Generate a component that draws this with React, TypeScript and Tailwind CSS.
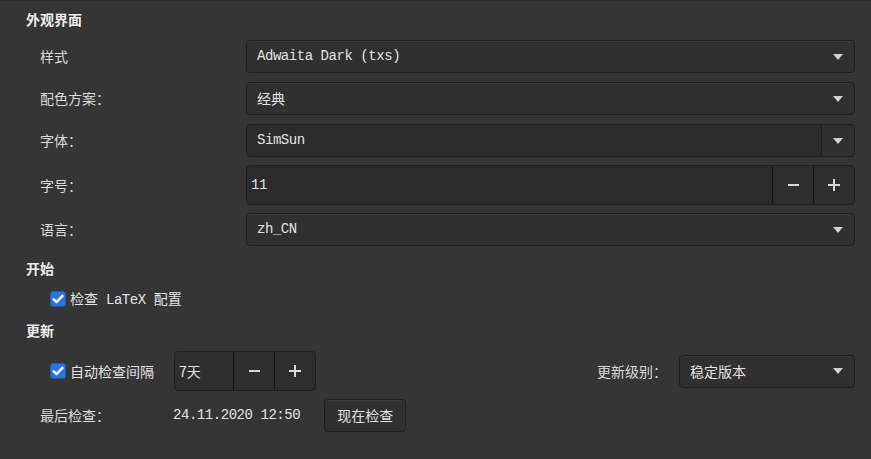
import React from 'react'

const mono = "font-['Liberation_Mono','Noto_Sans_CJK_SC',monospace] text-[14px] tracking-[-0.45px]"
const cjk = "font-['Noto_Sans_CJK_SC','Noto_Sans',sans-serif]"

function Arrow() {
  return (
    <svg width="10" height="6" viewBox="0 0 10 6" className="shrink-0">
      <polygon points="0,0 10,0 5,6" fill="#d2d2d2" />
    </svg>
  )
}

function Minus() {
  return (
    <svg width="11" height="12" viewBox="0 0 11 12">
      <rect x="0" y="5" width="11" height="2" fill="#d8d8d8" />
    </svg>
  )
}

function Plus() {
  return (
    <svg width="12" height="12" viewBox="0 0 12 12">
      <rect x="0" y="5" width="12" height="2" fill="#d8d8d8" />
      <rect x="5" y="0" width="2" height="12" fill="#d8d8d8" />
    </svg>
  )
}

function Check() {
  return (
    <span className="w-4 h-4 rounded-[3px] bg-[#2b74d8] border border-[#1d5cb3] flex items-center justify-center shrink-0">
      <svg width="12" height="10" viewBox="0 0 12 10">
        <path d="M1.5 5.2 L4.6 8 L10.5 1.8" stroke="#ffffff" strokeWidth="2.4" fill="none" strokeLinecap="round" strokeLinejoin="round" />
      </svg>
    </span>
  )
}

function Combo({ value, cn, className = '' }: { value: string; cn?: boolean; className?: string }) {
  return (
    <div className={`h-[33px] rounded-[4px] border border-[#1f1f1f] bg-[#303030] shadow-[inset_0_1px_0_#3a3a3a] flex items-center justify-between pl-[10px] pr-[11px] ${className}`}>
      <span className={`${cn ? `${cjk} text-[14px]` : mono} text-[#e2e2e2]`}>{value}</span>
      <Arrow />
    </div>
  )
}

function Row({ label, children, className = '' }: { label: string; children: React.ReactNode; className?: string }) {
  return (
    <div className={`flex items-center ${className}`}>
      <div className={`w-[220px] pl-[14px] shrink-0 ${cjk} text-[14px] text-[#dadada]`}>{label}</div>
      <div className="flex-1">{children}</div>
    </div>
  )
}

function Heading({ children, className = '' }: { children: React.ReactNode; className?: string }) {
  return (
    <div className={`h-[22px] flex items-center ${cjk} text-[14px] font-bold text-[#ececec] ${className}`}>
      {children}
    </div>
  )
}

export default function App() {
  return (
    <div className="w-[871px] h-[459px] bg-[#353535] border-t border-[#2a2a2a] overflow-hidden">
      <div className="pl-[26px] pr-[16px] pt-[7px] flex flex-col">
        <Heading>外观界面</Heading>

        <Row label="样式" className="mt-[10px]">
          <Combo value="Adwaita Dark (txs)" />
        </Row>
        <Row label="配色方案：" className="mt-[9px]">
          <Combo value="经典" cn />
        </Row>
        <Row label="字体：" className="mt-[9px]">
          <div className="h-[33px] rounded-[4px] border border-[#1f1f1f] bg-[#2c2c2c] flex overflow-hidden">
            <div className={`flex-1 flex items-center pl-[10px] ${mono} text-[#e2e2e2]`}>SimSun</div>
            <div className="w-[33px] border-l border-[#1f1f1f] bg-[#303030] flex items-center justify-center">
              <Arrow />
            </div>
          </div>
        </Row>
        <Row label="字号：" className="mt-[8px]">
          <div className="h-[40px] rounded-[4px] border border-[#1f1f1f] bg-[#2b2b2b] flex overflow-hidden">
            <div className={`flex-1 flex items-center pl-[4px] ${mono} text-[#e2e2e2]`}>11</div>
            <div className="w-[41px] border-l border-[#141414] bg-[#2e2e2e] flex items-center justify-center">
              <Minus />
            </div>
            <div className="w-[41px] border-l border-[#141414] bg-[#2e2e2e] flex items-center justify-center">
              <Plus />
            </div>
          </div>
        </Row>
        <Row label="语言：" className="mt-[8px]">
          <Combo value="zh_CN" />
        </Row>

        <Heading className="mt-[11px]">开始</Heading>
        <div className="h-[20px] mt-[10px] pl-[24px] flex items-center gap-[4px] text-[#e2e2e2]">
          <Check />
          <span className={`${cjk} text-[14px] whitespace-pre`}>
            检查<span className={mono}> LaTeX </span>配置
          </span>
        </div>

        <Heading className="mt-[10px]">更新</Heading>
        <div className="h-[40px] mt-[10px] flex items-center justify-between">
          <div className="flex items-center">
            <div className="pl-[24px] w-[148px] flex items-center gap-[4px] text-[#e2e2e2]">
              <Check />
              <span className={`${cjk} text-[14px]`}>自动检查间隔</span>
            </div>
            <div className="h-[40px] w-[142px] rounded-[4px] border border-[#1f1f1f] bg-[#2e2e2e] flex overflow-hidden">
              <div className={`w-[58px] flex items-center pl-[4px] ${cjk} text-[14px] text-[#e2e2e2]`}>7天</div>
              <div className="w-[41px] border-l border-[#141414] flex items-center justify-center">
                <Minus />
              </div>
              <div className="flex-1 border-l border-[#141414] flex items-center justify-center">
                <Plus />
              </div>
            </div>
          </div>
          <div className="flex items-center gap-[12px]">
            <span className={`${cjk} text-[14px] text-[#dadada]`}>更新级别：</span>
            <Combo value="稳定版本" cn className="w-[176px]" />
          </div>
        </div>

        <div className="h-[33px] mt-[8px] flex items-center">
          <div className={`w-[147px] pl-[14px] ${cjk} text-[14px] text-[#dadada]`}>最后检查：</div>
          <span className={`${mono} text-[#e2e2e2]`}>24.11.2020 12:50</span>
          <button className={`ml-[24px] h-[33px] w-[82px] rounded-[4px] border border-[#1f1f1f] bg-[#303030] shadow-[inset_0_1px_0_#3a3a3a] ${cjk} text-[14px] text-[#e2e2e2]`}>
            现在检查
          </button>
        </div>
      </div>
    </div>
  )
}
